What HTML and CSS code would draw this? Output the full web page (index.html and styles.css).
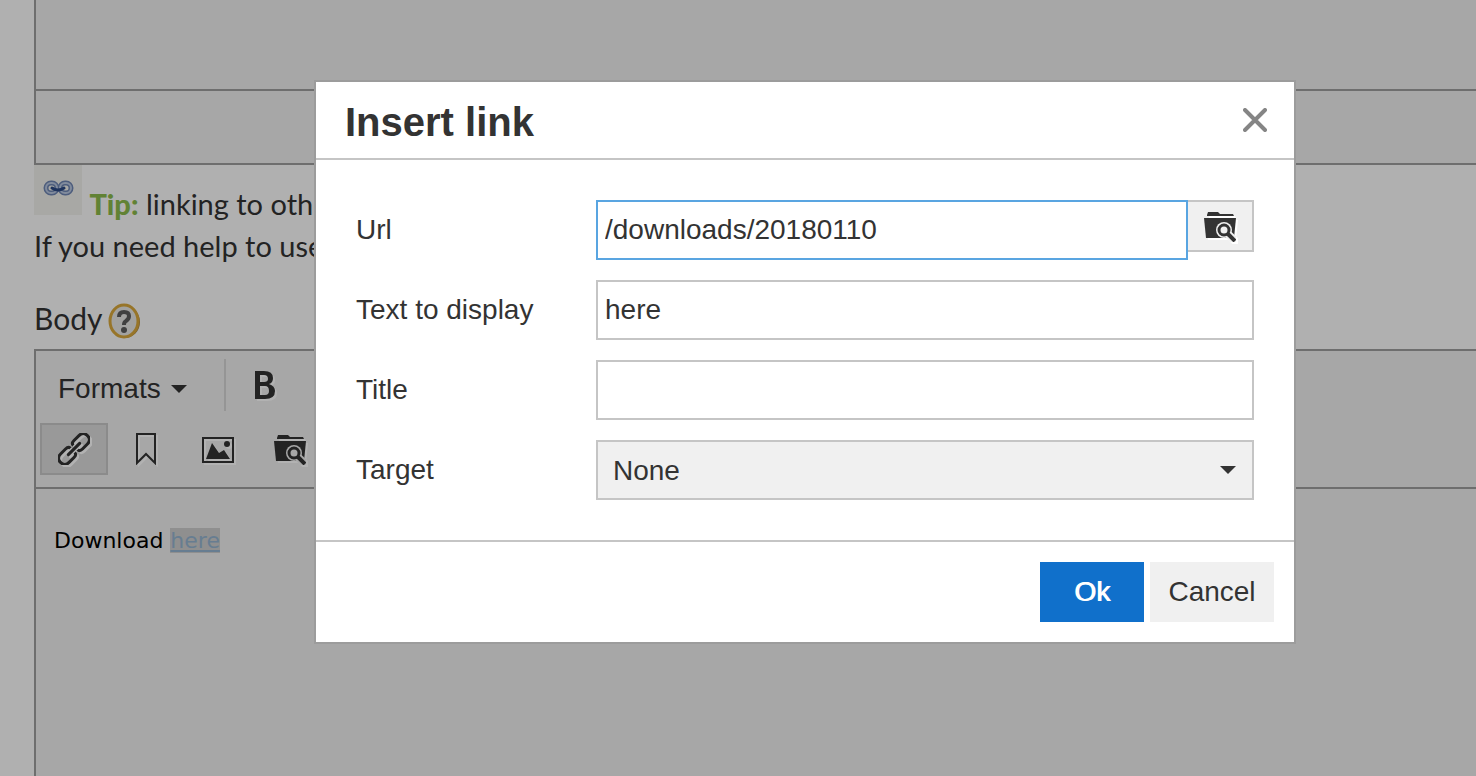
FILE: index.html
```html
<!DOCTYPE html>
<html lang="en">
<head>
  <meta charset="UTF-8" />
  <meta name="viewport" content="width=device-width, initial-scale=1.0"/>
  <title>Insert link</title>
  <link rel="stylesheet" href="styles.css">
</head>
<body>

<!-- Shared icons -->
<svg class="sprite" aria-hidden="true">
  <symbol id="icon-browse" viewBox="0 0 32 32">
    <path d="M3 5 L4 2 H14 L16 4 H29 L30 6 H3z"/>
    <path d="M0 8 H32 L30 28 H2z"/>
    <circle class="cut" cx="20" cy="20" r="8"/>
    <path class="cut-line" d="M24 24 L32 32"/>
    <circle class="ring" cx="20" cy="20" r="5"/>
    <path class="handle" d="M24 24 L31 31"/>
  </symbol>
</svg>

<!-- Page -->
<main class="page">
  <section class="editor editor-summary">
    <div class="editor-content"></div>
    <div class="editor-status"></div>
  </section>

  <div class="tip">
    <p>
      <span class="tip-icon">
        <svg width="32" height="18" viewBox="0 0 32 18">
          <g fill="none" stroke="#6f86b3" stroke-width="5">
            <rect x="4" y="4" width="11" height="10" rx="5"/>
            <rect x="18" y="4" width="11" height="10" rx="5"/>
          </g>
          <g fill="none" stroke="#b9c7e0" stroke-width="2">
            <rect x="4" y="4" width="11" height="10" rx="5"/>
            <rect x="18" y="4" width="11" height="10" rx="5"/>
          </g>
          <path d="M10 9 Q16 13 22 9" fill="none" stroke="#2c4a86" stroke-width="3" stroke-linecap="round"/>
        </svg>
      </span>
      <strong>Tip:</strong> linking to other
    </p>
    <p>If you need help to use</p>
  </div>

  <div class="field-title">
    <span>Body</span>
    <svg width="34" height="36" viewBox="0 0 34 36">
      <ellipse cx="17" cy="19" rx="15" ry="16" fill="#a7874a"/>
      <ellipse cx="16" cy="18" rx="14" ry="16" fill="#e9e8e6" stroke="#d9a83c" stroke-width="3"/>
      <path d="M11 14 Q11 9 16 9 Q21 9 21 13 Q21 16 18 18 Q16 19 16 22" fill="none" stroke="#5c5c5c" stroke-width="4"/>
      <circle cx="16" cy="27" r="3" fill="#5c5c5c"/>
    </svg>
  </div>

  <section class="editor editor-body">
    <div class="toolbar">
      <div class="toolbar-row">
        <button class="formats" type="button">Formats <span class="caret"></span></button>
        <span class="separator"></span>
        <button class="tool bold" type="button" aria-label="Bold">
          <svg width="32" height="32" viewBox="0 0 32 32">
            <path fill-rule="evenodd" d="M7 2 H16 Q25 2 25 9 Q25 14 21 15 Q27 17 27 22 Q27 30 17 30 H7z M12 6 V13 H16 Q20 13 20 10 Q20 6 16 6z M12 17 V26 H17 Q21 26 21 22 Q21 17 17 17z"/>
          </svg>
        </button>
      </div>
      <div class="toolbar-row">
        <button class="tool active" type="button" aria-label="Insert link">
          <svg width="32" height="32" viewBox="0 0 32 32">
            <g fill="none" stroke="#333" stroke-width="3" transform="rotate(-45 16 16)">
              <path d="M18 13 Q18 10 22 10 H29 Q35 10 35 16 Q35 22 29 22 H22 Q18 22 18 19"/>
              <path d="M14 13 Q14 10 10 10 H3 Q-3 10 -3 16 Q-3 22 3 22 H10 Q14 22 14 19"/>
              <path d="M8 16 H24" stroke-linecap="round"/>
            </g>
          </svg>
        </button>
        <button class="tool" type="button" aria-label="Anchor">
          <svg width="32" height="32" viewBox="0 0 32 32">
            <path d="M7 1 H25 V30 L16 21 L7 30z" fill="none" stroke="#333" stroke-width="2"/>
          </svg>
        </button>
        <button class="tool" type="button" aria-label="Insert image">
          <svg width="32" height="32" viewBox="0 0 32 32">
            <rect x="1" y="5" width="30" height="24" fill="none" stroke="#333" stroke-width="2"/>
            <path d="M4 26 L10 10 L17 20 L22 17 L28 26z"/>
            <circle cx="25" cy="11" r="3"/>
          </svg>
        </button>
        <button class="tool" type="button" aria-label="Browse files">
          <svg width="32" height="32"><use href="#icon-browse"/></svg>
        </button>
      </div>
    </div>
    <div class="editor-text">Download <a href="#">here</a></div>
  </section>
</main>

<div class="overlay"></div>

<!-- Dialog -->
<div class="dialog-layer">
  <form class="dialog" role="dialog" aria-labelledby="dialog-title">
    <header class="dialog-head">
      <h1 id="dialog-title">Insert link</h1>
      <button class="close" type="button" aria-label="Close">
        <svg width="24" height="24" viewBox="0 0 24 24">
          <path d="M2 2 L22 22 M22 2 L2 22" stroke="#858585" stroke-width="4" stroke-linecap="round"/>
        </svg>
      </button>
    </header>

    <div class="dialog-body">
      <div class="row">
        <label for="url">Url</label>
        <div class="control">
          <input class="focused" id="url" type="text" value="/downloads/20180110">
          <button class="browse-btn" type="button" aria-label="Browse">
            <svg width="32" height="32"><use href="#icon-browse"/></svg>
          </button>
        </div>
      </div>
      <div class="row">
        <label for="text">Text to display</label>
        <div class="control"><input id="text" type="text" value="here"></div>
      </div>
      <div class="row">
        <label for="title">Title</label>
        <div class="control"><input id="title" type="text"></div>
      </div>
      <div class="row">
        <label for="target">Target</label>
        <div class="control select">
          <select id="target">
            <option>None</option>
          </select>
          <span class="caret"></span>
        </div>
      </div>
    </div>

    <footer class="dialog-foot">
      <button class="btn primary" type="submit">Ok</button>
      <button class="btn" type="button">Cancel</button>
    </footer>
  </form>
</div>

</body>
</html>
```

FILE: styles.css
```css
* { margin: 0; padding: 0; box-sizing: border-box; }

body {
  font-family: Lato, sans-serif;
  font-size: 30px;
  line-height: 42px;
  color: #333;
  background: #fdfdfd;
  overflow: hidden;
}

button, input, select {
  font-family: "Liberation Sans", Arial, sans-serif;
  font-size: 28px;
  color: #333;
}

button {
  border: none;
  background: none;
}

svg { display: block; fill: #333; }

.sprite { position: absolute; width: 0; height: 0; }

/* Page behind the dialog */
.page {
  display: flex;
  flex-direction: column;
  min-height: 100vh;
  padding-left: 34px;
}

.editor {
  background: #f0f0f0;
  border: 2px solid #9e9e9e;
  border-right: none;
}

.editor-summary { border-top: none; }
.editor-summary .editor-content { height: 89px; }

.editor-status {
  height: 74px;
  border-top: 2px solid #9e9e9e;
}

.tip { font-size: 29px; white-space: nowrap; }
.tip strong { color: #8bbb4b; font-weight: 900; }
.tip p:first-child { height: 60px; }

.tip-icon {
  display: inline-block;
  width: 48px;
  height: 50px;
  padding: 14px 8px;
  background: #f1f1ec;
  vertical-align: baseline;
}

.field-title {
  display: flex;
  align-items: center;
  gap: 6px;
  margin: 30px 0 10px;
}

.field-title svg { margin-top: 6px; }

.editor-body {
  flex: 1;
  border-bottom: none;
}

.toolbar {
  padding: 8px 4px 12px;
  border-bottom: 2px solid #9e9e9e;
}

.toolbar-row {
  display: flex;
  align-items: center;
  gap: 4px;
}

.toolbar-row + .toolbar-row { margin-top: 12px; }

.formats {
  display: flex;
  align-items: center;
  gap: 10px;
  width: 180px;
  height: 52px;
  padding: 8px 18px 0;
}

.caret {
  border: 8px solid transparent;
  border-top-color: #333;
  border-bottom: none;
}

.separator {
  width: 2px;
  height: 52px;
  background: #d6d6d6;
}

.tool {
  display: flex;
  justify-content: center;
  align-items: center;
  width: 68px;
  height: 52px;
  border: 2px solid transparent;
}

.tool svg, .browse-btn svg { filter: drop-shadow(2px 2px 0 #fff); }

.tool.active {
  background: #dbdbdb;
  border-color: #c8c8c8;
}

.cut { fill: #f0f0f0; }
.cut-line { stroke: #f0f0f0; stroke-width: 8; }
.ring { fill: none; stroke: #333; stroke-width: 3; }
.handle { stroke: #333; stroke-width: 4; }

.editor-text {
  padding: 36px 18px;
  font-family: "DejaVu Sans", sans-serif;
  font-size: 22px;
  line-height: 32px;
  color: #000;
}

.editor-text a {
  background: #cdcdcd;
  color: #94b4d0;
}

.overlay {
  position: fixed;
  top: 0; left: 0;
  width: 100%; height: 100%;
  background: rgba(0, 0, 0, 0.3);
}

/* Dialog */
.dialog-layer {
  position: fixed;
  top: 80px;
  left: 314px;
  right: 180px;
}

.dialog {
  font-family: "Liberation Sans", Arial, sans-serif;
  font-size: 28px;
  line-height: 32px;
  background: #fff;
  border: 2px solid #9c9c9c;
}

.dialog-head {
  display: flex;
  justify-content: space-between;
  align-items: center;
  height: 78px;
  padding: 0 27px 0 29px;
  border-bottom: 2px solid #c5c5c5;
}

.dialog-head h1 {
  padding-top: 4px;
  font-size: 40px;
  line-height: 48px;
}

.dialog-body {
  display: flex;
  flex-direction: column;
  gap: 20px;
  padding: 40px;
}

.row {
  display: flex;
  align-items: center;
}

.row label { width: 240px; }

.control {
  display: flex;
  flex: 1;
  align-items: flex-start;
  position: relative;
}

.control input, .control select {
  flex: 1;
  min-width: 0;
  height: 60px;
  padding: 0 7px;
  border: 2px solid #c5c5c5;
  border-radius: 0;
  background: #fff;
  outline: none;
}

.control input.focused { border-color: #59a5e1; }

.browse-btn {
  display: flex;
  justify-content: center;
  align-items: center;
  width: 66px;
  height: 52px;
  background: #f0f0f0;
  border: 2px solid #c5c5c5;
  border-left: none;
}

.control select {
  appearance: none;
  padding: 0 15px;
  background: #f0f0f0;
}

.select .caret {
  position: absolute;
  top: 26px;
  right: 18px;
  pointer-events: none;
}

.dialog-foot {
  display: flex;
  justify-content: flex-end;
  gap: 6px;
  padding: 20px;
  border-top: 2px solid #c5c5c5;
}

.btn {
  width: 124px;
  height: 60px;
  background: #f0f0f0;
}

.btn.primary {
  width: 104px;
  background: #1070cb;
  color: #fff;
  text-shadow: 1px 0 0 #fff;
}
```
